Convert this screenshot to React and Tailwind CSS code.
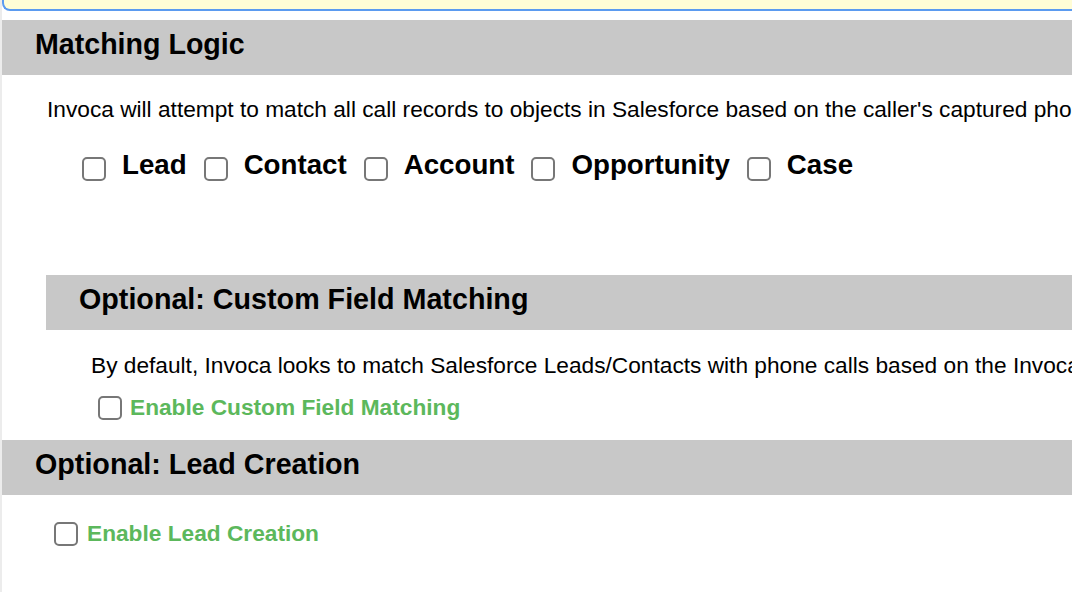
import React from "react";

function Box({ className = "" }) {
  return (
    <span
      className={`inline-block shrink-0 w-[24px] h-[24px] rounded-[5px] border-2 border-[#777777] bg-white ${className}`}
    />
  );
}

const objects = ["Lead", "Contact", "Account", "Opportunity", "Case"];

export default function App() {
  return (
    <div
      className="flex w-[1072px] h-[592px] overflow-hidden bg-white text-black"
      style={{ fontFamily: '"Liberation Sans", Arial, sans-serif' }}
    >
      <div className="w-[2px] shrink-0 bg-[#ececec]" />
      <div className="flex-1 min-w-0 overflow-hidden">
        <div className="h-[11px] bg-[#fffdd6] border-l-2 border-b-2 border-[#5b9bf0] rounded-bl-[8px]" />

        <div className="mt-[9px] h-[55px] bg-[#c8c8c8] flex items-center pl-[33px] pb-[7px]">
          <h2 className="text-[28.6px] font-bold leading-[33px] whitespace-nowrap">Matching Logic</h2>
        </div>

        <p className="mt-[22px] pl-[45px] text-[22.7px] leading-[25px] whitespace-nowrap">
          Invoca will attempt to match all call records to objects in Salesforce based on the caller's captured phone number.
        </p>

        <div className="mt-[27px] pl-[80px] flex items-start">
          {objects.map((o) => (
            <label key={o} className="flex items-start mr-[17px]">
              <Box className="mt-[8px]" />
              <span className="ml-[16px] text-[27.7px] font-bold leading-[32px] whitespace-nowrap">{o}</span>
            </label>
          ))}
        </div>

        <div className="mt-[94px] ml-[44px] h-[55px] bg-[#c8c8c8] flex items-center pl-[33px] pb-[6px]">
          <h3 className="text-[28.7px] font-bold leading-[33px] whitespace-nowrap">Optional: Custom Field Matching</h3>
        </div>

        <p className="mt-[23px] pl-[89px] text-[22.7px] leading-[25px] whitespace-nowrap">
          By default, Invoca looks to match Salesforce Leads/Contacts with phone calls based on the Invoca caller ID.
        </p>

        <label className="mt-[16px] ml-[96px] flex items-start">
          <Box className="mt-[2px]" />
          <span className="ml-[8px] text-[22.7px] font-bold leading-[26px] text-[#5cb85c] whitespace-nowrap">
            Enable Custom Field Matching
          </span>
        </label>

        <div className="mt-[20px] h-[55px] bg-[#c8c8c8] flex items-center pl-[33px] pb-[6px]">
          <h3 className="text-[28.7px] font-bold leading-[33px] whitespace-nowrap">Optional: Lead Creation</h3>
        </div>

        <label className="mt-[25px] ml-[52px] flex items-start">
          <Box className="mt-[2px]" />
          <span className="ml-[9px] text-[22.7px] font-bold leading-[26px] text-[#5cb85c] whitespace-nowrap">
            Enable Lead Creation
          </span>
        </label>
      </div>
    </div>
  );
}
